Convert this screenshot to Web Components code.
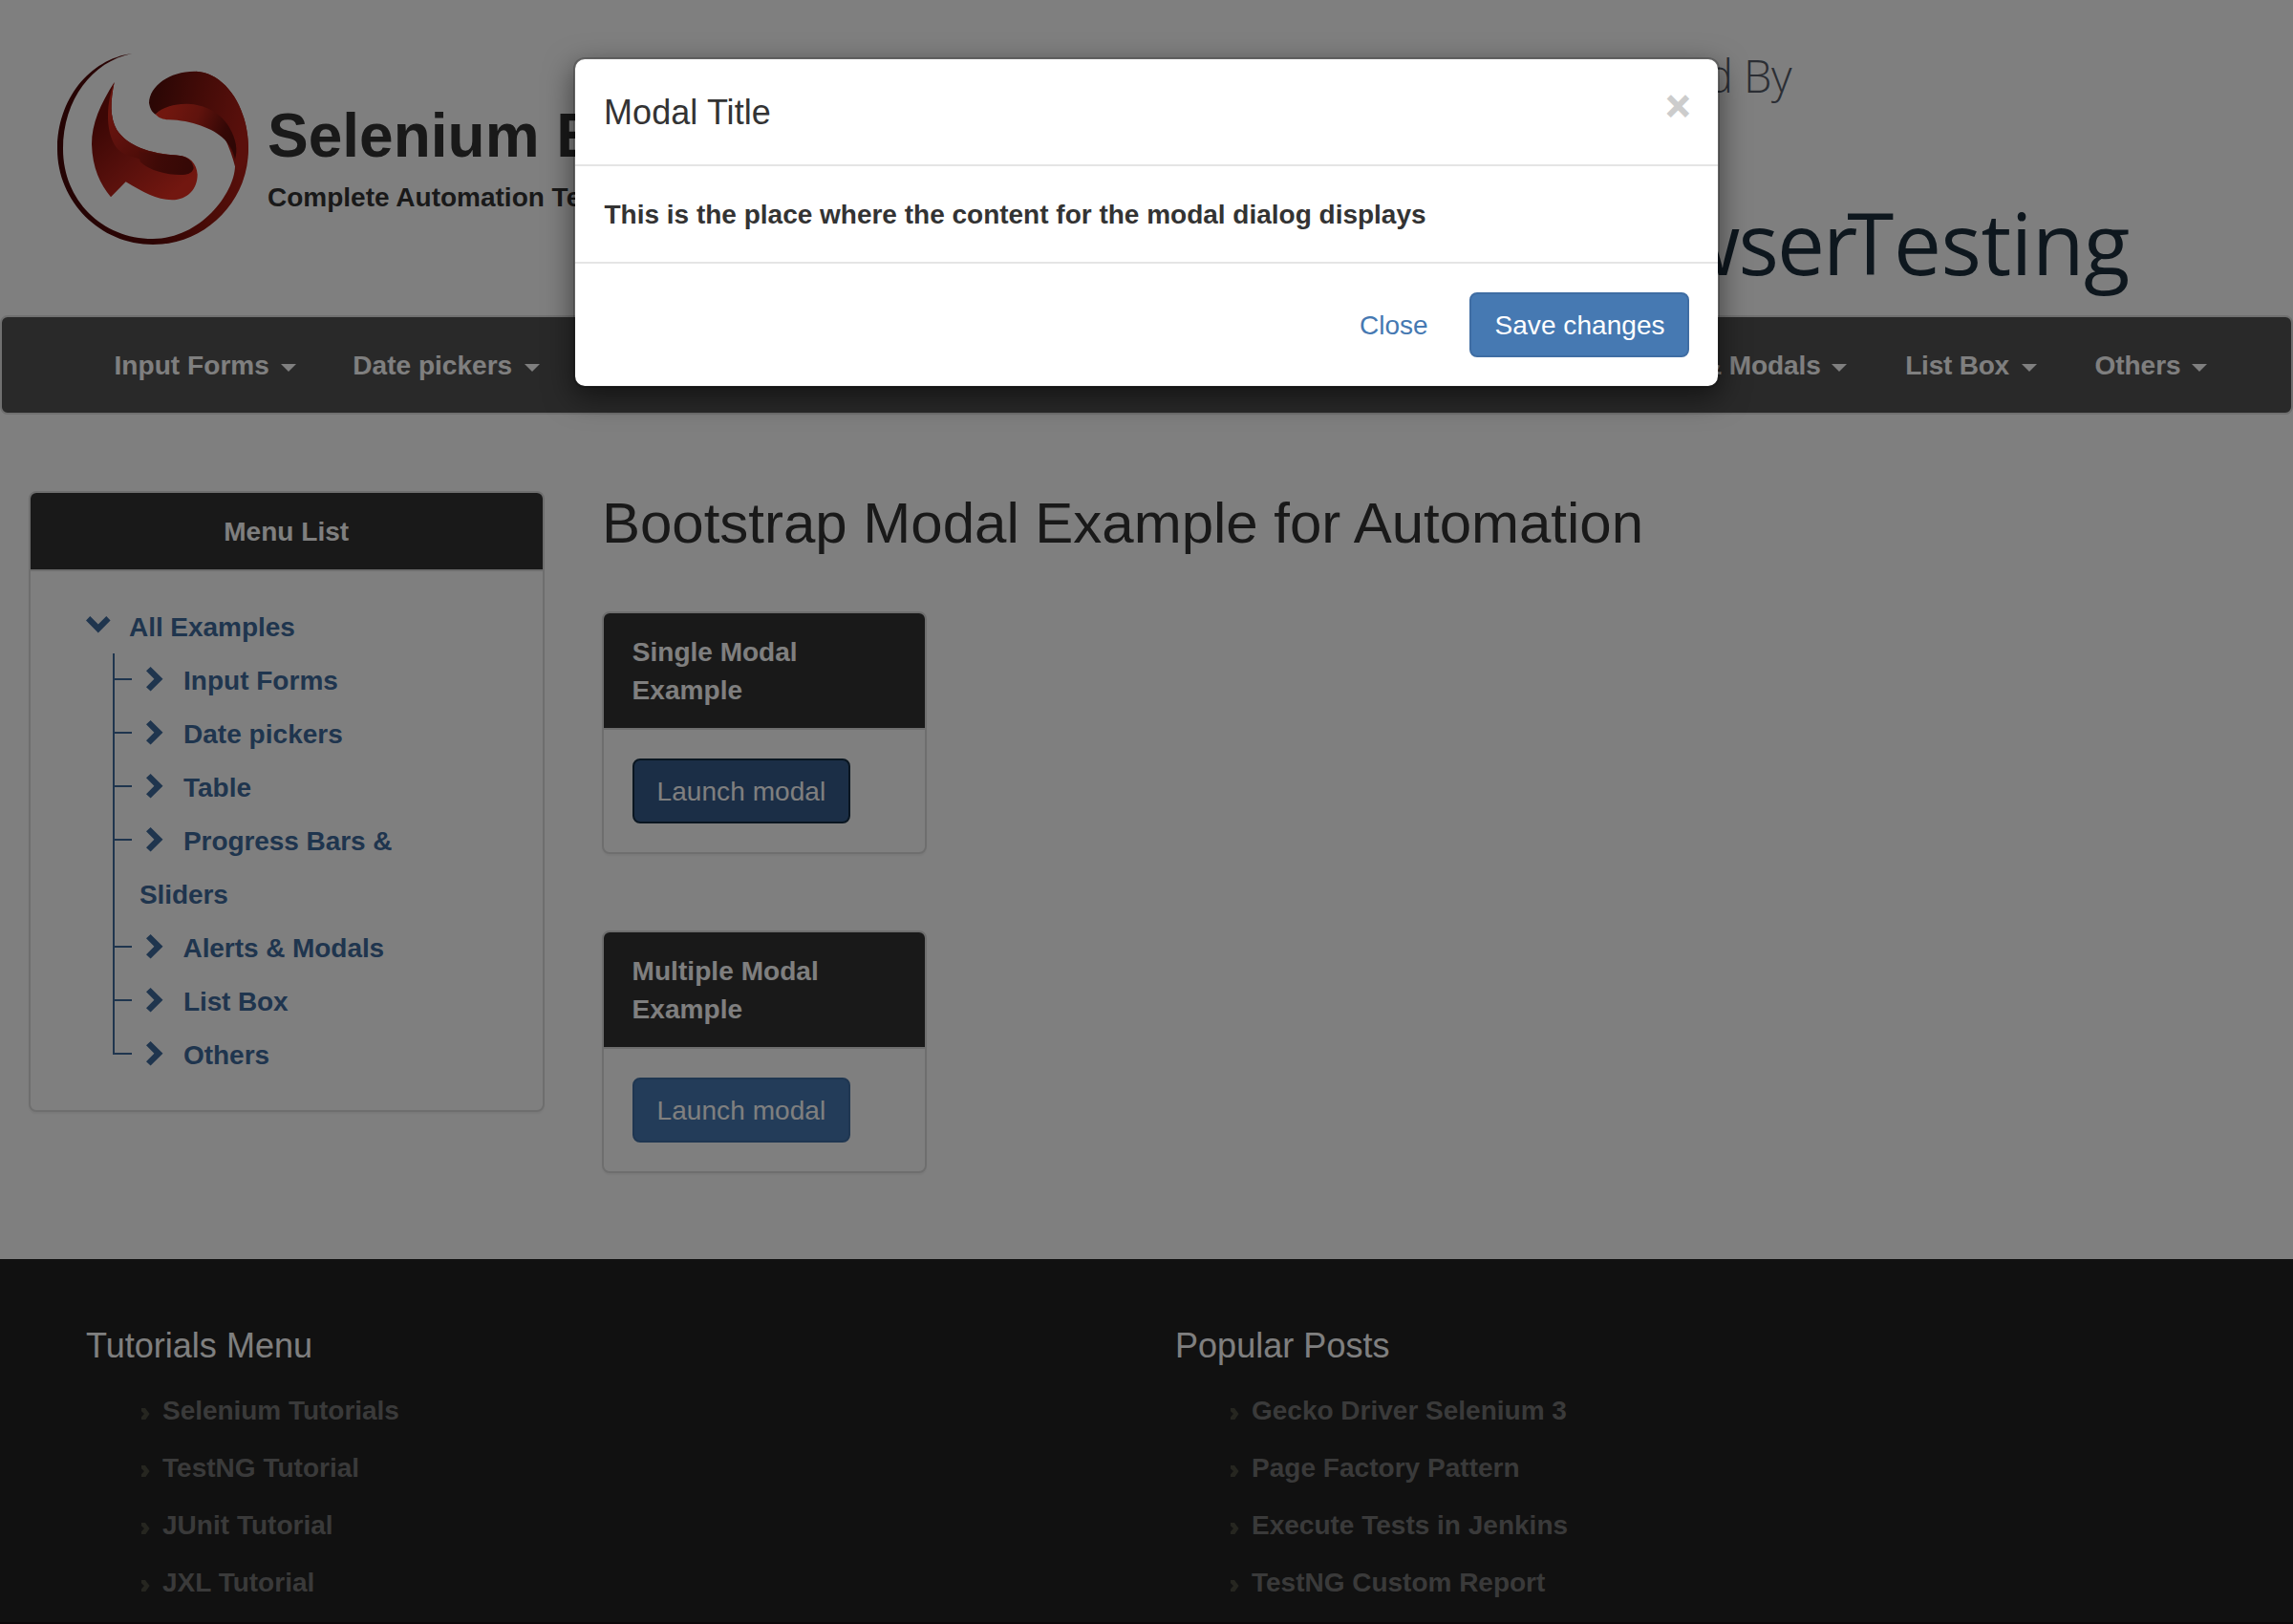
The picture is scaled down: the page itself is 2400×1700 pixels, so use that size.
<!DOCTYPE html>
<html lang="en">
<head>
<meta charset="utf-8">
<title>Selenium Easy - Bootstrap Modal</title>
<style>
html, body { margin: 0; padding: 0; background: #fff; }
body { font: bold 28px/40px "Liberation Sans", Arial, sans-serif; color: #333; width: 2400px; height: 1700px; overflow: hidden; }
</style>
</head>
<body>
<demo-page></demo-page>
<script>
const define = (name, html, ready) => {
  const tpl = document.createElement('template');
  tpl.innerHTML = html;
  customElements.define(name, class extends HTMLElement {
    connectedCallback() {
      if (this.shadowRoot) return;
      this.attachShadow({ mode: 'open' }).appendChild(tpl.content.cloneNode(true));
      if (ready) ready.call(this, this.shadowRoot);
    }
  });
};

/* Text whose box is trimmed to its ink; "w" tracks the letters to an exact width, "dx" nudges the start. */
define('ink-text', `
<style>:host{display:inline-block;white-space:nowrap}span{display:inline-block;transform:translateY(1px)}</style>
<span><slot></slot></span>`, function (root) {
  const cs = getComputedStyle(this);
  const ctx = document.createElement('canvas').getContext('2d');
  ctx.font = `${cs.fontWeight} ${cs.fontSize} ${cs.fontFamily}`;
  const text = this.textContent, m = ctx.measureText(text);
  const ink = m.actualBoundingBoxLeft + m.actualBoundingBoxRight;
  const w = parseFloat(this.getAttribute('w')) || ink;
  const span = root.querySelector('span');
  span.style.letterSpacing = ((w - ink) / Math.max(1, text.length - 1)) + 'px';
  span.style.marginLeft = m.actualBoundingBoxLeft + (parseFloat(this.getAttribute('dx')) || 0) + 'px';
  this.style.width = w + 'px';
});

define('brand-logo', `
<style>:host{display:block;width:200px;height:200px}svg{display:block}</style>
<svg width="200" height="200" viewBox="30 30 600 600">
  <defs>
    <linearGradient id="ring" gradientUnits="userSpaceOnUse" x1="30" y1="400" x2="630" y2="330">
      <stop offset="0" stop-color="#480808"/><stop offset=".45" stop-color="#5a0a08"/><stop offset=".75" stop-color="#94180f"/><stop offset="1" stop-color="#b42018"/>
    </linearGradient>
    <linearGradient id="cap" gradientUnits="userSpaceOnUse" x1="330" y1="170" x2="620" y2="240">
      <stop offset="0" stop-color="#560e0a"/><stop offset=".45" stop-color="#84160f"/><stop offset="1" stop-color="#b42018"/>
    </linearGradient>
    <linearGradient id="fold" gradientUnits="userSpaceOnUse" x1="370" y1="225" x2="590" y2="310">
      <stop offset="0" stop-color="#e22e1e"/><stop offset=".4" stop-color="#c0261a"/><stop offset=".8" stop-color="#6a100c"/><stop offset="1" stop-color="#5c0e0a"/>
    </linearGradient>
    <linearGradient id="body" gradientUnits="userSpaceOnUse" x1="170" y1="240" x2="380" y2="480">
      <stop offset="0" stop-color="#780f0b"/><stop offset=".5" stop-color="#ae2018"/><stop offset="1" stop-color="#e42e20"/>
    </linearGradient>
    <linearGradient id="edge" gradientUnits="userSpaceOnUse" x1="190" y1="230" x2="300" y2="360">
      <stop offset="0" stop-color="#d42a1c"/><stop offset=".5" stop-color="#b8221a"/><stop offset="1" stop-color="#96180f"/>
    </linearGradient>
    <linearGradient id="inner" gradientUnits="userSpaceOnUse" x1="250" y1="350" x2="450" y2="395">
      <stop offset="0" stop-color="#a81e16"/><stop offset=".5" stop-color="#7c140e"/><stop offset="1" stop-color="#6a100c"/>
    </linearGradient>
  </defs>
  <path fill="url(#ring)" d="M265 30C130 48 30 175 30 330C30 495 165 630 330 630C495 630 630 495 630 330C630 195 555 90 465 86C455 150 560 260 588 385C585 470 480 612 330 612C170 612 48 490 48 330C48 175 140 55 265 30Z"/>
  <path fill="url(#cap)" d="M465 86C385 84 320 130 318 185C321 205 330 216 338 221C390 180 480 180 530 225C575 262 590 300 590 350L588 385C600 420 630 370 630 330C630 195 555 90 465 86Z"/>
  <path fill="url(#fold)" d="M338 221C350 233 360 236 380 238C450 240 520 265 555 300C573 320 583 338 588 362C597 335 592 300 570 262C545 215 490 190 440 188C400 187 360 197 338 221Z"/>
  <path fill="url(#body)" d="M209 120C165 190 138 250 138 315C140 390 165 440 198 481L245 433C300 465 340 490 390 490C440 489 470 455 470 410C468 375 445 351 410 350C320 345 250 320 217 270C194 230 197 180 209 120Z"/>
  <path fill="url(#edge)" d="M209 120C185 180 178 270 215 325C230 345 255 352 290 362L410 350C320 345 250 320 217 270C194 230 197 180 209 120Z"/>
  <path fill="url(#inner)" d="M285 336C320 346 370 349 410 350C440 352 456 370 458 390C455 402 445 410 425 411C380 413 320 400 290 370Z"/>
</svg>`);

define('site-header', `
<style>
:host{display:flex;height:330px;box-sizing:border-box;padding-left:60px}
brand-logo{margin-top:56px}
.name{margin:106px 0 0 21px}
.name div{white-space:nowrap}
h1{font:bold 64px/70px "Liberation Sans",Arial,sans-serif;margin:0 0 10px}
.ad{margin-left:auto;width:1100px;font-family:"Open Sans",sans-serif}
.by{font-size:47px;font-weight:300;line-height:60px;color:#565c68;margin:48px 0 0 290px}
.cbt{font-size:89px;font-weight:400;line-height:110px;color:#1d2f3d;margin-top:91px;text-align:right;padding-right:171px;white-space:nowrap;letter-spacing:-2px}
.cbt span{margin-left:-9px;letter-spacing:-.4px}
</style>
<brand-logo></brand-logo>
<div class="name"><h1><ink-text>Selenium Easy</ink-text></h1><div><ink-text>Complete Automation Testing Tutorials</ink-text></div></div>
<div class="ad"><div class="by"><ink-text w="286">Sponsored By</ink-text></div><div class="cbt">CrossBrowser<span>Testing</span></div></div>`);

define('nav-item', `
<style>
:host{display:flex;align-items:center;color:#fff;height:40px;gap:13px}
i{width:0;height:0;border:8px solid transparent;border-top-color:#fff;border-bottom:0;margin-top:5px}
</style>
<slot></slot><i></i>`);

define('nav-bar', `
<style>
:host{display:flex;justify-content:space-between;box-sizing:border-box;height:104px;background:#525252;border:2px solid #e0e0e0;border-radius:8px;padding:30px 88px 0 118.5px}
div{display:flex;gap:60px}
.r{gap:62px}
.r nav-item{gap:12px}
</style>
<div><nav-item><ink-text w="160.8">Input Forms</ink-text></nav-item><nav-item><ink-text w="165.3">Date pickers</ink-text></nav-item></div>
<div class="r"><nav-item><ink-text w="209.5">Alerts &amp; Modals</ink-text></nav-item><nav-item><ink-text w="108.3">List Box</ink-text></nav-item><nav-item><ink-text w="88.5">Others</ink-text></nav-item></div>`);

define('ui-panel', `
<style>
:host{display:block;box-sizing:border-box;border:2px solid #ddd;border-radius:8px;box-shadow:0 2px 2px rgba(0,0,0,.05);background:#fff}
header{background:#333;color:#fff;padding:20px 30px;border-bottom:2px solid #ddd;border-radius:6px 6px 0 0}
section{padding:30px}
</style>
<header><slot name="head"></slot></header><section><slot></slot></section>`);

define('ui-button', `
<style>
:host{display:inline-flex;box-sizing:border-box;height:68px;padding:12px 24px;border:2px solid #3f6da3;border-radius:8px;background:#4679b2;color:#fff;font-weight:400}
:host([kind=focus]){background:#365c8c;border-color:#142c42}
:host([kind=link]){background:none;border-color:transparent;color:#4679b2}
</style><slot></slot>`);

define('tree-row', `
<style>
:host{display:flex;height:56px;line-height:56px;color:#3f6a9c}
b{width:20px;border-left:2px solid #3f6a9c;box-sizing:border-box;margin-left:58px}
b::before{content:"";display:block;height:2px;margin-top:26px;background:#3f6a9c}
:host([plain]) b::before{display:none}
:host([last]) b{height:28px}
svg{margin:14px 22px 0 15px;flex:none}
:host([plain]) svg{display:none}
:host([plain]) slot{margin-left:9px}
slot{display:block}
</style>
<b></b><svg width="18" height="26" viewBox="0 0 18 26"><path d="M0 4.3 4.6 0 17.5 12.8 4.6 25.6 0 21.2 8.4 12.8Z" fill="#3f6a9c"/></svg><slot></slot>`);

define('menu-tree', `
<style>
:host{display:block;width:540px}
.head{text-align:center}
.root{display:flex;height:56px;line-height:56px;color:#3f6a9c;padding-left:28px}
.root svg{margin:17px 20px 0 0;flex:none}
.rows{display:block;margin-left:-2px}
</style>
<ui-panel>
  <div slot="head" class="head"><ink-text w="129.7">Menu List</ink-text></div>
  <div class="root"><svg width="26" height="18" viewBox="0 0 26 18"><path d="M4.3 0 12.8 8.6 21.3 0 25.6 4.4 12.8 17.4 0 4.4Z" fill="#3f6a9c"/></svg><ink-text w="173.2" dx="-1">All Examples</ink-text></div>
  <div class="rows">
    <tree-row><ink-text w="160.3">Input Forms</ink-text></tree-row>
    <tree-row><ink-text w="165.3">Date pickers</ink-text></tree-row>
    <tree-row><ink-text w="70.4" dx="-1">Table</ink-text></tree-row>
    <tree-row><ink-text w="217.3">Progress Bars &amp;</ink-text></tree-row>
    <tree-row plain><ink-text w="92.3" dx="-1">Sliders</ink-text></tree-row>
    <tree-row><ink-text w="210.1" dx="-1.5">Alerts &amp; Modals</ink-text></tree-row>
    <tree-row><ink-text w="109">List Box</ink-text></tree-row>
    <tree-row last><ink-text w="88.5">Others</ink-text></tree-row>
  </div>
</ui-panel>`);

define('main-content', `
<style>
:host{display:flex;flex-direction:column;align-items:flex-start;gap:80px}
h2{font:400 60px/66px "Liberation Sans",Arial,sans-serif;margin:0 0 -20px 4px}
ui-panel{width:340px}
.h{padding:0 0 0 .5px}
.h div{height:40px}
ui-button{width:228px;padding-left:25.5px}
</style>
<h2><ink-text w="1086">Bootstrap Modal Example for Automation</ink-text></h2>
<ui-panel><div slot="head" class="h"><div><ink-text w="171" dx="-.7">Single Modal</ink-text></div><div><ink-text w="114">Example</ink-text></div></div>
<ui-button kind="focus"><ink-text w="173.5">Launch modal</ink-text></ui-button></ui-panel>
<ui-panel><div slot="head" class="h"><div><ink-text w="192.5">Multiple Modal</ink-text></div><div><ink-text w="114">Example</ink-text></div></div>
<ui-button><ink-text w="173.5">Launch modal</ink-text></ui-button></ui-panel>`);

define('link-item', `
<style>
:host{display:flex;height:60px;color:#747474}
svg{margin:18px 14px 0 0;flex:none}
</style><svg width="9" height="12" viewBox="0 0 9 12"><path d="M0 0H4L8.6 6 4.4 12H0V9.2L3 6.1 0 3.2Z" fill="#4c4c40"/></svg><slot></slot>`);

define('site-footer', `
<style>
:host{display:flex;box-sizing:border-box;background:#222;height:382px;padding:65px 0 0 90px;border-bottom:2px solid #180e12}
.c{width:1140px}
h3{font:400 36px/50px "Liberation Sans",Arial,sans-serif;color:#fff;margin:0 0 23px}
link-item{margin-left:58px}
.c+.c h3{margin-left:2px}
</style>
<div class="c"><h3><ink-text w="235">Tutorials Menu</ink-text></h3>
<link-item><ink-text w="247.3" dx="-1">Selenium Tutorials</ink-text></link-item>
<link-item><ink-text w="204.3" dx="-1">TestNG Tutorial</ink-text></link-item>
<link-item><ink-text w="176.8" dx="-1">JUnit Tutorial</ink-text></link-item>
<link-item><ink-text w="158" dx="-1">JXL Tutorial</ink-text></link-item></div>
<div class="c"><h3><ink-text w="221.5">Popular Posts</ink-text></h3>
<link-item><ink-text w="328.3">Gecko Driver Selenium 3</ink-text></link-item>
<link-item><ink-text w="278.5">Page Factory Pattern</ink-text></link-item>
<link-item><ink-text w="329.5">Execute Tests in Jenkins</ink-text></link-item>
<link-item><ink-text w="307" dx="-1">TestNG Custom Report</ink-text></link-item></div>`);

define('modal-dialog', `
<style>
:host{display:block;position:absolute;inset:0;background:rgba(0,0,0,.5)}
.box{width:1200px;margin:60px auto 0;box-sizing:border-box;background:#fff;background-clip:padding-box;border:2px solid rgba(0,0,0,.2);border-radius:12px;box-shadow:0 10px 30px rgba(0,0,0,.5)}
header{display:flex;justify-content:space-between;height:50px;padding:30px 30px 30px 32px;border-bottom:2px solid #e5e5e5}
h4{font:400 36px/50px "Liberation Sans",Arial,sans-serif;margin:0}
.x{font-size:44px;line-height:42px;color:#ccc;margin:-3px .5px 0 0;-webkit-text-stroke:1px #ccc}
section{padding:30px 30.5px}
footer{display:flex;justify-content:flex-end;gap:18px;border-top:2px solid #e5e5e5;padding:30px}
.save{width:230px;padding-left:25.5px}
</style>
<div class="box">
<header><h4><ink-text w="172.5">Modal Title</ink-text></h4><div class="x"><ink-text>×</ink-text></div></header>
<section><ink-text w="859.5">This is the place where the content for the modal dialog displays</ink-text></section>
<footer><ui-button kind="link"><ink-text w="70">Close</ink-text></ui-button><ui-button class="save"><ink-text w="176">Save changes</ink-text></ui-button></footer>
</div>`);

define('demo-page', `
<style>
:host{display:block;position:relative;width:2400px;height:1700px;overflow:hidden}
main{display:flex;box-sizing:border-box;height:884px;padding:80px 30px 0;align-items:flex-start;gap:60px}
</style>
<site-header></site-header><nav-bar></nav-bar>
<main><menu-tree></menu-tree><main-content></main-content></main>
<site-footer></site-footer>
<modal-dialog></modal-dialog>`);
</script>
</body>
</html>
